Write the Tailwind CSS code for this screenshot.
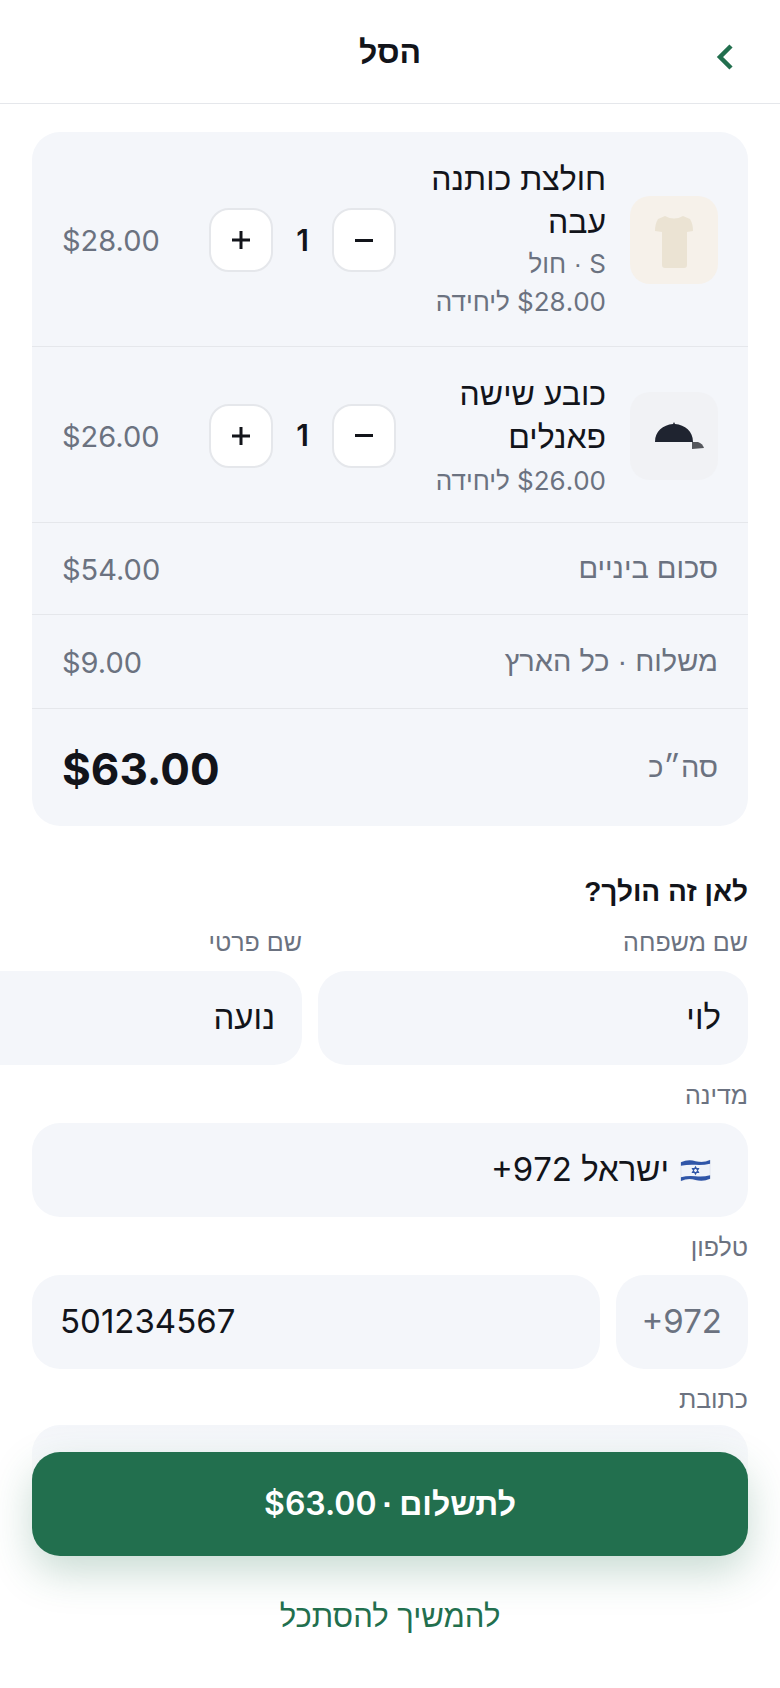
<!DOCTYPE html>
<html lang="he" dir="rtl">
<head>
<meta charset="utf-8">
<script src="https://cdn.jsdelivr.net/npm/@tailwindcss/browser@4"></script>
</head>
<body class="bg-white">
<div class="relative w-[780px] h-[1688px] overflow-hidden bg-white text-[#12141a] font-['Liberation_Sans',sans-serif]">
  <header class="relative h-[104px] border-b border-[#e5e7eb] flex items-center justify-center">
    <h1 class="text-[32px] font-bold leading-none">הסל</h1>
    <svg class="absolute right-[46px] top-[44px]" width="18" height="26" viewBox="0 0 18 26" fill="none"><path d="M15 2 L4 13 L15 24" stroke="#226f4e" stroke-width="4.5"/></svg>
  </header>
  <main class="px-[32px] pt-[28px]">
    <section class="bg-[#f4f6fa] rounded-[28px] overflow-hidden">
      <div class="flex items-center gap-[24px] h-[215px] px-[30px] pt-[2px] border-b border-[#e5e7eb]">
        <div class="w-[88px] h-[88px] rounded-[20px] bg-[#f6f1ea] shrink-0">
          <svg width="88" height="88" viewBox="0 0 88 88"><path d="M35 20 Q44 25 53 20 L60 23 Q63 28 63 35 L57 36 V69 Q57 72 54 72 H35 Q32 72 32 69 V36 L25 35 Q25 28 28 23 Z" fill="#ebe3d3"/></svg>
        </div>
        <div class="flex-1 min-w-0 self-start pt-[24px]">
          <div class="text-[32px] leading-[43px]">חולצת כותנה עבה</div>
          <div class="mt-[1px] text-[26px] leading-[38px] text-[#6b7280]"><span class="font-['Inter']">S</span> · חול</div>
          <div class="text-[26px] leading-[38px] text-[#6b7280]"><bdi class="font-['Inter']">$28.00</bdi> ליחידה</div>
        </div>
        <div class="flex items-center w-[187px] justify-between shrink-0">
          <div class="w-[64px] h-[64px] rounded-[20px] bg-white border-2 border-[#e5e7eb] flex items-center justify-center"><span class="block w-[18px] h-[3px] bg-[#12141a]"></span></div>
          <span class="font-['Inter'] text-[30px] font-semibold">1</span>
          <div class="w-[64px] h-[64px] rounded-[20px] bg-white border-2 border-[#e5e7eb] flex items-center justify-center"><svg width="20" height="20" viewBox="0 0 20 20"><path d="M10 1 V19 M1 10 H19" stroke="#12141a" stroke-width="3"/></svg></div>
        </div>
        <div class="w-[123px] shrink-0 text-left font-['Inter'] text-[29px] pt-[2px] text-[#6b7280]">$28.00</div>
      </div>
      <div class="flex items-center gap-[24px] h-[176px] px-[30px] pt-[2px] border-b border-[#e5e7eb]">
        <div class="w-[88px] h-[88px] rounded-[20px] bg-[#f1f2f5] shrink-0">
          <svg width="88" height="88" viewBox="0 0 88 88"><path d="M25 50 C25 39 33 33 43 32 L44 30 L45 32 C55 33 63 39 63 50 Z" fill="#1f2430"/><path d="M62 50 L68 50 C71 51 73 53 74 56 L62 57 Z" fill="#55575c"/></svg>
        </div>
        <div class="flex-1 min-w-0 self-start pt-[24px]">
          <div class="text-[32px] leading-[43px]">כובע שישה פאנלים</div>
          <div class="mt-[2px] text-[26px] leading-[39px] text-[#6b7280]"><bdi class="font-['Inter']">$26.00</bdi> ליחידה</div>
        </div>
        <div class="flex items-center w-[187px] justify-between shrink-0">
          <div class="w-[64px] h-[64px] rounded-[20px] bg-white border-2 border-[#e5e7eb] flex items-center justify-center"><span class="block w-[18px] h-[3px] bg-[#12141a]"></span></div>
          <span class="font-['Inter'] text-[30px] font-semibold">1</span>
          <div class="w-[64px] h-[64px] rounded-[20px] bg-white border-2 border-[#e5e7eb] flex items-center justify-center"><svg width="20" height="20" viewBox="0 0 20 20"><path d="M10 1 V19 M1 10 H19" stroke="#12141a" stroke-width="3"/></svg></div>
        </div>
        <div class="w-[123px] shrink-0 text-left font-['Inter'] text-[29px] pt-[2px] text-[#6b7280]">$26.00</div>
      </div>
      <div class="flex items-center justify-between h-[92px] px-[30px] border-b border-[#e5e7eb] text-[29px] text-[#6b7280]"><span>סכום ביניים</span><span class="font-['Inter'] pt-[2px]">$54.00</span></div>
      <div class="flex items-center justify-between h-[94px] px-[30px] border-b border-[#e5e7eb] text-[29px] text-[#6b7280]"><span>משלוח · כל הארץ</span><span class="font-['Inter'] pt-[2px]">$9.00</span></div>
      <div class="flex items-center justify-between h-[117px] px-[30px] text-[29px] text-[#6b7280]"><span>סה״כ</span><span class="font-['Inter'] text-[44px] font-bold text-[#12141a] pt-[2px]">$63.00</span></div>
    </section>
    <h2 class="mt-[46px] text-[28px] font-bold leading-[40px]">לאן זה הולך?</h2>
    <div class="mt-[12px] grid grid-cols-2 gap-[16px] w-[876px]">
      <div>
        <div class="text-[25px] leading-[36px] text-[#6b7280]">שם משפחה</div>
        <div class="mt-[11px] h-[94px] rounded-[28px] bg-[#f4f6fa] flex items-center px-[27px] text-[33px]">לוי</div>
      </div>
      <div>
        <div class="text-[25px] leading-[36px] text-[#6b7280]">שם פרטי</div>
        <div class="mt-[11px] h-[94px] rounded-[28px] bg-[#f4f6fa] flex items-center px-[27px] text-[33px]">נועה</div>
      </div>
    </div>
    <div class="mt-[12px] text-[25px] leading-[36px] text-[#6b7280]">מדינה</div>
    <div class="mt-[10px] h-[94px] rounded-[28px] bg-[#f4f6fa] flex items-center gap-[10px] px-[36px] text-[33px]">
      <svg width="33" height="25" viewBox="0 0 30 24" class="shrink-0"><path d="M1 4 Q8 1 15 3 T29 2 V20 Q22 23 15 21 T1 22 Z" fill="#f0f3fa" stroke="#d5dae5" stroke-width=".5"/><path d="M1 4 Q8 1 15 3 T29 2 V5.5 Q22 7 15 6.5 T1 7.5 Z" fill="#2f55a8"/><path d="M1 18.5 Q8 16.5 15 17.5 T29 16.5 V20 Q22 23 15 21 T1 22 Z" fill="#2f55a8"/><path d="M15 8.5 L18 14 H12 Z M15 15.5 L12 10 H18 Z" fill="none" stroke="#2f55a8" stroke-width="1"/></svg>
      <span>ישראל <bdi dir="ltr" class="font-['Inter']">+972</bdi></span>
    </div>
    <div class="mt-[12px] text-[25px] leading-[36px] text-[#6b7280]">טלפון</div>
    <div class="mt-[10px] flex gap-[16px]">
      <div class="w-[132px] h-[94px] shrink-0 rounded-[28px] bg-[#f4f6fa] flex items-center pr-[26px] font-['Inter'] text-[33px] text-[#6b7280]"><bdi dir="ltr">+972</bdi></div>
      <div dir="ltr" class="flex-1 h-[94px] rounded-[28px] bg-[#f4f6fa] flex items-center px-[28px] font-['Inter'] text-[33px]">501234567</div>
    </div>
    <div class="mt-[12px] text-[25px] leading-[36px] text-[#6b7280]">כתובת</div>
    <div class="mt-[8px] h-[94px] rounded-[28px] bg-[#f4f6fa]"></div>
  </main>
  <footer class="absolute inset-x-0 bottom-0 h-[264px] px-[32px] pt-[28px] bg-gradient-to-b from-white/0 via-white via-30% to-white">
    <div class="h-[104px] rounded-[28px] bg-[#226f4e] shadow-[0_16px_40px_rgba(34,111,78,0.25)] flex items-center justify-center gap-[6px] text-[32px] font-bold text-white"><span>לתשלום</span><span>·</span><bdi class="font-['Inter'] text-[32px] font-semibold">$63.00</bdi></div>
    <div class="mt-[38px] text-center text-[31px] leading-[46px] text-[#226f4e]">להמשיך להסתכל</div>
  </footer>
</div>
</body>
</html>
